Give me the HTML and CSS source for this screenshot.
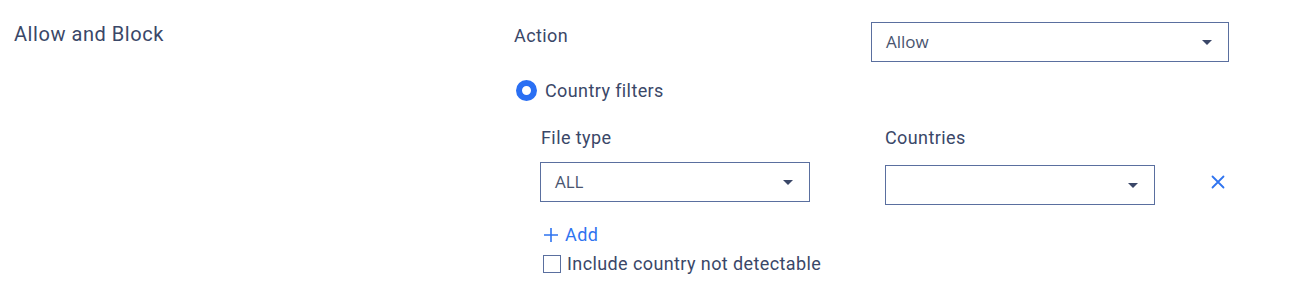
FILE: index.html
```html
<!DOCTYPE html>
<html>
<head>
<meta charset="utf-8">
<link rel="stylesheet" href="styles.css">
</head>
<body>
<div class="page">
  <div class="section-title">Allow and Block</div>
  <div class="content">
    <div class="action-row">
      <div class="label action-label">Action</div>
      <div class="select action-select"><span class="value">Allow</span><span class="caret"></span></div>
    </div>
    <div class="radio-row">
      <span class="radio"></span>
      <span class="label">Country filters</span>
    </div>
    <div class="filters">
      <div class="filter-grid">
        <div class="label col-label">File type</div>
        <div class="label col-label countries-label">Countries</div>
        <div></div>
        <div class="select small-select"><span class="value">ALL</span><span class="caret"></span></div>
        <div class="select small-select countries"><span class="value"></span><span class="caret"></span></div>
        <div class="remove">
          <svg width="14" height="14" viewBox="0 0 14 14"><path d="M1.5 1.5 L12.5 12.5 M12.5 1.5 L1.5 12.5" stroke="#2f74f0" stroke-width="1.8" stroke-linecap="round"/></svg>
        </div>
      </div>
      <div class="add">
        <svg width="16" height="16" viewBox="0 0 16 16"><path d="M8 1 V15 M1 8 H15" stroke="#2f74f0" stroke-width="1.6"/></svg>
        <span>Add</span>
      </div>
      <div class="check-row">
        <span class="checkbox"></span>
        <span class="label">Include country not detectable</span>
      </div>
    </div>
  </div>
</div>
</body>
</html>
```

FILE: styles.css
```css
html, body {
  margin: 0;
  padding: 0;
  background: #ffffff;
}
.page {
  display: grid;
  grid-template-columns: 500px 1fr;
  padding-left: 14px;
  font-family: Roboto, "Liberation Sans", sans-serif;
  color: #3a4768;
}
.section-title {
  font-size: 20px;
  letter-spacing: 0.55px;
  padding-top: 22px;
  line-height: 24px;
}
.label {
  font-size: 18px;
  letter-spacing: 0.4px;
  line-height: 20px;
}
.content {
  display: flex;
  flex-direction: column;
}
.action-row {
  display: flex;
  align-items: flex-start;
  padding-top: 22px;
}
.action-label {
  width: 357px;
  padding-top: 4px;
}
.select {
  box-sizing: border-box;
  border: 1px solid #5a6f9f;
  height: 40px;
  display: flex;
  align-items: center;
  justify-content: space-between;
  padding: 0 16px 0 14px;
  background: #fff;
}
.action-select {
  width: 358px;
}
.value {
  font-family: "Open Sans", sans-serif;
  font-size: 17px;
  color: #4a556f;
  margin-top: -1px;
}
.caret {
  width: 0;
  height: 0;
  border-left: 5px solid transparent;
  border-right: 5px solid transparent;
  border-top: 5px solid #3a4768;
}
.radio-row {
  display: flex;
  align-items: center;
  gap: 8px;
  margin-top: 18px;
  padding-left: 2px;
}
.radio {
  box-sizing: border-box;
  width: 21px;
  height: 21px;
  border-radius: 50%;
  border: 6px solid #2a6ff3;
  background: #fff;
}
.filters {
  padding-left: 26px;
  display: flex;
  flex-direction: column;
}
.filter-grid {
  display: grid;
  grid-template-columns: 345px 327px auto;
  margin-top: 27px;
}
.col-label {
  height: 27px;
  padding-left: 1px;
}
.countries-label {
  padding-left: 0;
}
.small-select {
  width: 270px;
  margin-top: 7px;
}
.small-select.countries {
  margin-top: 10px;
}
.remove {
  display: flex;
  align-items: center;
  margin-top: 7px;
  height: 40px;
  margin-left: -1px;
}
.add {
  display: flex;
  align-items: center;
  gap: 6px;
  margin-top: 20px;
  padding-left: 3px;
  color: #2f74f0;
  font-size: 18px;
  letter-spacing: 0.4px;
  line-height: 20px;
}
.check-row {
  display: flex;
  align-items: center;
  gap: 6px;
  margin-top: 9px;
  padding-left: 3px;
}
.checkbox {
  box-sizing: border-box;
  width: 18px;
  height: 18px;
  border: 1px solid #5a6f9f;
  background: #fff;
}
```
